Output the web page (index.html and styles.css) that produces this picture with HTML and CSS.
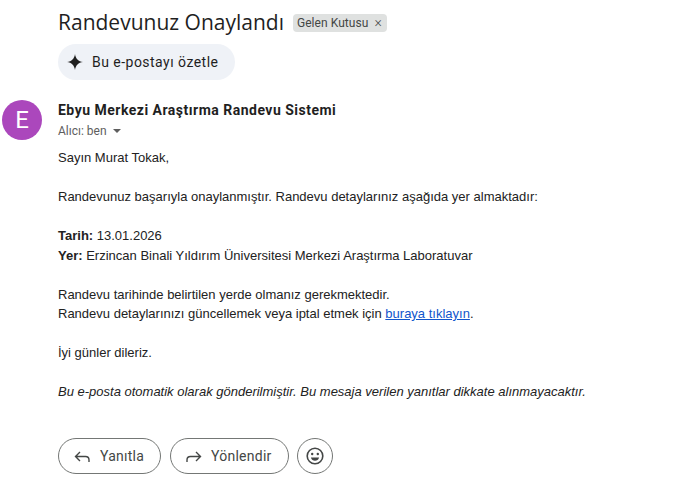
FILE: index.html
```html
<!DOCTYPE html>
<html lang="tr">
<head>
<meta charset="utf-8">
<title>Randevunuz Onaylandı</title>
<link rel="stylesheet" href="styles.css">
</head>
<body>
<div class="page">
  <div class="subject-row">
    <h1 class="subject">Randevunuz Onaylandı</h1>
    <span class="label">Gelen Kutusu <span class="label-x">×</span></span>
  </div>
  <div class="summary-row">
    <button class="summary">
      <svg class="spark" viewBox="0 0 16 16" width="16" height="16"><path d="M8 0C8.6 4.6 11.4 7.4 16 8 11.4 8.6 8.6 11.4 8 16 7.4 11.4 4.6 8.6 0 8 4.6 7.4 7.4 4.6 8 0Z"/></svg>
      <span>Bu e-postayı özetle</span>
    </button>
  </div>
  <div class="message">
    <div class="avatar">E</div>
    <div class="content">
      <div class="sender">Ebyu Merkezi Araştırma Randevu Sistemi</div>
      <div class="to">Alıcı: ben <span class="caret"></span></div>
      <div class="body">
        <p>Sayın Murat Tokak,</p>
        <p>Randevunuz başarıyla onaylanmıştır. Randevu detaylarınız aşağıda yer almaktadır:</p>
        <p><b>Tarih:</b> 13.01.2026<br><b>Yer:</b> Erzincan Binali Yıldırım Üniversitesi Merkezi Araştırma Laboratuvar</p>
        <p>Randevu tarihinde belirtilen yerde olmanız gerekmektedir.<br>Randevu detaylarınızı güncellemek veya iptal etmek için <a href="#">buraya tıklayın</a>.</p>
        <p>İyi günler dileriz.</p>
        <p><i>Bu e-posta otomatik olarak gönderilmiştir. Bu mesaja verilen yanıtlar dikkate alınmayacaktır.</i></p>
      </div>
      <div class="actions">
        <button class="action reply">
          <svg viewBox="0 0 20 20" width="20" height="20"><path d="M6 6 1.5 10.5 6 15M1.5 10.5H11.5C13.7 10.5 15 12 15 14V16"/></svg>
          <span>Yanıtla</span>
        </button>
        <button class="action forward">
          <svg viewBox="0 0 20 20" width="20" height="20"><path d="M10 6 14.5 10.5 10 15M14.5 10.5H4.5C2.3 10.5 1 12 1 14V16"/></svg>
          <span>Yönlendir</span>
        </button>
        <button class="emoji" aria-label="Emoji">
          <svg viewBox="0 0 20 20" width="20" height="20"><circle cx="10" cy="10" r="7.8"/><circle class="dot" cx="7.2" cy="8" r="1.2"/><circle class="dot" cx="12.8" cy="8" r="1.2"/><path class="smile" d="M5.9 11.5H14.1C13.5 13.6 11.9 14.8 10 14.8S6.5 13.6 5.9 11.5Z"/></svg>
        </button>
      </div>
    </div>
  </div>
</div>
</body>
</html>
```
FILE: styles.css
```css
* { box-sizing: border-box; }
html, body { margin: 0; padding: 0; background: #fff; }
.page { width: 688px; height: 491px; overflow: hidden; padding: 0 0 0 2px; font-family: "Liberation Sans", Arial, sans-serif; color: #222; }
.subject-row { display: flex; align-items: center; margin-left: 56px; height: 44px; }
.subject { margin: 0; font-family: "Open Sans", sans-serif; font-size: 21px; font-weight: 400; color: #1f1f1f; }
.label { margin-left: 9px; margin-top: 1px; height: 18px; padding: 0 5px 0 4px; background: #dfe1e0; border-radius: 4px; font-family: Roboto, sans-serif; font-size: 12px; line-height: 18px; letter-spacing: .05px; color: #444746; white-space: nowrap; }
.label-x { margin-left: 3px; font-size: 14px; font-weight: 300; line-height: 14px; }
.summary-row { margin-left: 56px; }
.summary { display: inline-flex; align-items: center; gap: 9px; height: 36px; padding: 0 17px 0 9px; border: 0; border-radius: 18px; background: #eff2f7; font-family: Roboto, sans-serif; font-size: 14px; letter-spacing: .47px; color: #1f1f1f; }
.spark { fill: #1f1f1f; }
.message { display: flex; margin-top: 20px; }
.avatar { flex: none; width: 40px; height: 40px; margin-right: 16px; border-radius: 50%; background: #ab47bc; color: #fff; font-family: Roboto, sans-serif; font-size: 24px; line-height: 40px; text-align: center; }
.sender { font-family: Roboto, sans-serif; font-size: 14px; font-weight: 700; letter-spacing: .49px; color: #1f1f1f; line-height: 20px; }
.to { margin-top: 1px; font-family: Roboto, sans-serif; font-size: 12px; color: #5e5e5e; line-height: 20px; }
.caret { display: inline-block; margin-left: 3px; vertical-align: 2px; border: 4px solid transparent; border-top-color: #5e5e5e; border-bottom-width: 0; }
.body { margin-top: 7px; font-size: 13px; line-height: 19.5px; color: #222; }
.body p { margin: 0 0 19.5px; }
.body a { color: #1155cc; }
.actions { display: flex; gap: 9px; margin-top: 36px; }
.action { display: inline-flex; align-items: center; height: 36px; border: 1px solid #747775; border-radius: 18px; background: #fff; font-family: Roboto, sans-serif; font-size: 14px; font-weight: 400; letter-spacing: .25px; color: #444746; }
.reply { width: 103px; gap: 6px; padding: 0 0 0 15px; }
.forward { width: 119px; gap: 5px; padding: 0 0 0 15px; }
.action svg { fill: none; stroke: #444746; stroke-width: 1.4; }
.emoji { display: flex; align-items: center; justify-content: center; width: 36px; height: 36px; padding: 0; margin-left: -1px; border: 1px solid #747775; border-radius: 50%; background: #fff; }
.emoji svg { fill: none; stroke: #444746; stroke-width: 1.6; }
.emoji .dot { fill: #444746; stroke: none; }
.emoji .smile { fill: #444746; stroke: none; }
```
